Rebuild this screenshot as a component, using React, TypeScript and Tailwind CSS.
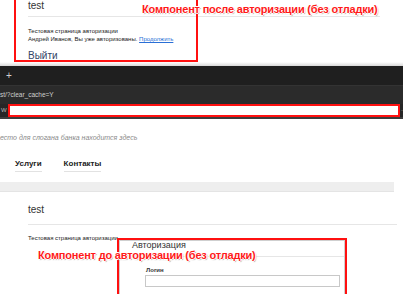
import React from 'react'

const outline = '[text-shadow:1px_0_0_#fff,-1px_0_0_#fff,0_1px_0_#fff,0_-1px_0_#fff,1px_1px_1px_#999,-1px_-1px_0_#fff]'

function Label({ text, className }: { text: string; className: string }) {
  return (
    <div className={`absolute whitespace-nowrap text-[11px] leading-[13px] font-bold text-[#ff1a1a] tracking-[-0.2px] ${outline} ${className}`}>
      {text}
    </div>
  )
}

export default function App() {
  return (
    <div className="relative w-[403px] h-[294px] overflow-hidden bg-white font-['Liberation_Sans',Arial,sans-serif] text-[#222]">
      {/* верхний скриншот: после авторизации */}
      <div className="relative h-[66px] bg-gradient-to-b from-white from-[94%] to-[#d8d8d8]">
        <div className="pl-[28px] pr-[23px]">
          <div className="text-[10px] leading-[11px] text-[#333]">test</div>
          <div className="mt-[5px] border-b border-[#e6e6e6]" />
          <div className="mt-[10px] text-[6px] leading-[8px] text-[#222]">
            <div>Тестовая страница авторизации</div>
            <div>
              Андрей Иванов, Вы уже авторизованы.{' '}
              <span className="text-[#2a6fd6] underline">Продолжить</span>
            </div>
          </div>
          <div className="mt-[7px] text-[10px] leading-[11px] text-[#334466] underline">Выйти</div>
        </div>
        <div className="absolute left-[14px] top-[-4px] w-[184px] h-[66px] border-2 border-[#ff1010]" />
        <Label text="Компонент после авторизации (без отладки)" className="left-[142px] top-[3px]" />
      </div>

      {/* тёмная панель браузера */}
      <div className="bg-[#1f1f1f]">
        <div className="h-[19px] pl-[6px] flex items-center text-[#d0d0d0] text-[10px] leading-none">+</div>
        <div className="h-[19px] bg-[#2b2b2b] border-t border-[#333] flex items-center text-[6.5px] text-[#cfcfcf]">
          st/?clear_cache=Y
        </div>
        <div className="h-[15px] bg-[#262626] flex items-center gap-[1px] border-b-2 border-[#3c3c3c]">
          <span className="text-[6px] text-[#bbb] pl-[1px]">W</span>
          <div className="w-[395px] h-[13px] bg-white border-2 border-[#ff1010]" />
          <span className="text-[6px] text-[#888]">-</span>
        </div>
      </div>

      {/* страница сайта */}
      <div className="h-[63px] pt-[14px]">
        <div className="italic text-[7px] leading-[9px] text-[#8a8a8a]">есто для слогана банка находится здесь</div>
        <div className="mt-[17px] pl-[15px] flex gap-[22px] text-[8px] leading-[10px] text-[#222]">
          <div className="pb-[2px] border-b border-[#e2e2e2] font-semibold">Услуги</div>
          <div className="pb-[2px] border-b border-[#e2e2e2] font-semibold">Контакты</div>
        </div>
      </div>
      <div className="h-[10px] w-[394px] bg-[#eeeeee] border-b border-[#e4e4e4]" />

      <div className="relative pl-[28px] pr-[6px] pt-[12px]">
        <div className="text-[10px] leading-[11px] text-[#333]">test</div>
        <div className="mt-[9px] border-b border-[#e6e6e6]" />
        <div className="mt-[9px] text-[6px] leading-[8px] text-[#222]">Тестовая страница авторизации</div>
      </div>

      {/* нижний скриншот: до авторизации */}
      <div className="absolute left-[117px] top-[238px] w-[230px] h-[70px] border-2 border-[#ff1010] bg-white">
        <div className="h-full border border-[#cfcfcf]">
          <div className="pl-[12px] text-[9px] leading-[9px] text-[#333]">Авторизация</div>
          <div className="mt-[6px] border-b border-[#e6e6e6]" />
          <div className="pl-[26px] pt-[10px] text-[6px] leading-[7px] font-bold text-[#333]">Логин</div>
          <div className="ml-[25px] mt-[1px] w-[195px] h-[12px] border border-[#c8c8c8] bg-white" />
        </div>
      </div>
      <Label text="Компонент до авторизации (без отладки)" className="left-[38px] top-[249px]" />
    </div>
  )
}
